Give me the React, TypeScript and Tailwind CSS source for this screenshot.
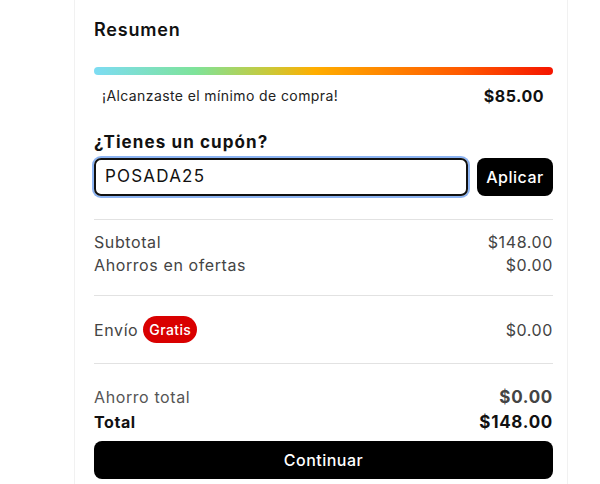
import React from "react";

export default function App() {
  const font = { fontFamily: "Inter, 'Noto Sans', sans-serif" };
  return (
    <div className="w-[600px] h-[484px] bg-white overflow-hidden" style={font}>
      <div className="ml-[74px] w-[494px] h-[500px] border-x border-[#f1f1f1] pl-[19px] pr-[14px] pt-[18px]">
        <h2 className="text-[18px] font-semibold text-[#111] leading-[24px] tracking-[0.8px]">Resumen</h2>
        <div
          className="mt-[25px] h-[8px] rounded-full"
          style={{
            background:
              "linear-gradient(90deg, #7ddcf3 0%, #7ee39a 22%, #c9c93a 38%, #ffae00 48%, #ff8a00 62%, #ff5a00 80%, #f51500 100%)",
          }}
        />
        <div className="mt-[10px] flex items-center justify-between pl-[8px] pr-[9px]">
          <span className="text-[14px] text-[#222] leading-[22px] tracking-[0.4px]">¡Alcanzaste el mínimo de compra!</span>
          <span className="text-[16px] font-bold text-[#111] leading-[22px] tracking-[0.5px]">$85.00</span>
        </div>
        <h3 className="mt-[23px] text-[17px] font-bold text-[#111] leading-[24px] tracking-[1.1px]">¿Tienes un cupón?</h3>
        <div className="mt-[4px] flex items-center gap-[9px]">
          <div className="flex-1 h-[38px] rounded-[7px] border-2 border-[#111] ring-2 ring-[#8db4f2] flex items-center px-[9px]">
            <span className="text-[17px] text-[#111] tracking-[1.2px]">POSADA25</span>
          </div>
          <button className="h-[38px] w-[76px] rounded-[8px] bg-black text-white text-[16px] font-medium tracking-[0.5px]">
            Aplicar
          </button>
        </div>
        <div className="mt-[23px] border-t border-[#e2e2e2]" />
        <div className="pt-[11px] pb-[18px] text-[16px] text-[#444] leading-[23px] tracking-[0.6px]">
          <div className="flex justify-between">
            <span>Subtotal</span>
            <span>$148.00</span>
          </div>
          <div className="flex justify-between">
            <span>Ahorros en ofertas</span>
            <span>$0.00</span>
          </div>
        </div>
        <div className="border-t border-[#e2e2e2]" />
        <div className="h-[67px] flex items-center justify-between text-[16px] text-[#444] tracking-[0.6px]">
          <div className="flex items-center gap-[5px]">
            <span>Envío</span>
            <span className="h-[27px] px-[6px] rounded-full bg-[#d90000] text-white text-[14px] font-medium tracking-[0.4px] flex items-center">
              Gratis
            </span>
          </div>
          <span>$0.00</span>
        </div>
        <div className="border-t border-[#e2e2e2]" />
        <div className="pt-[21px] leading-[25px]">
          <div className="flex justify-between items-center text-[16px] text-[#555] tracking-[0.6px]">
            <span>Ahorro total</span>
            <span className="text-[17px] font-bold text-[#444] tracking-[0.7px]">$0.00</span>
          </div>
          <div className="flex justify-between items-center text-[16px] text-[#111] font-bold tracking-[0.6px]">
            <span>Total</span>
            <span className="text-[17px] tracking-[0.7px]">$148.00</span>
          </div>
        </div>
        <button className="mt-[6px] w-full h-[38px] rounded-[8px] bg-black text-white text-[16px] font-medium tracking-[0.5px]">
          Continuar
        </button>
      </div>
    </div>
  );
}
